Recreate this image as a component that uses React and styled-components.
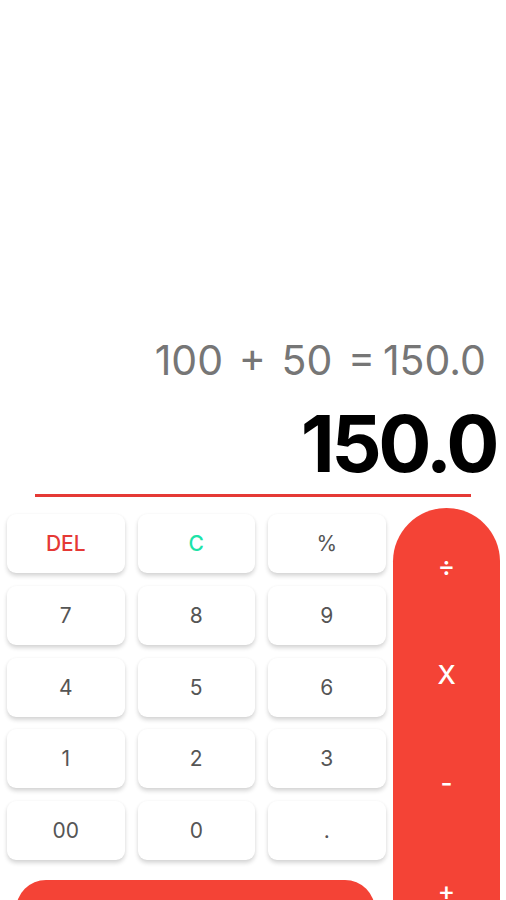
import React from "react";
import styled, { createGlobalStyle } from "styled-components";

const Global = createGlobalStyle`
  html, body { margin: 0; padding: 0; background: #ffffff; }
  body { font-family: Inter, "Noto Sans", sans-serif; }
  #root { width: 506px; height: 900px; overflow: hidden; }
`;

const Page = styled.div`
  width: 506px;
  height: 900px;
  display: flex;
  flex-direction: column;
  overflow: hidden;
  background: #fff;
`;

const Display = styled.div`
  height: 494px;
  flex-shrink: 0;
  display: flex;
  flex-direction: column;
  justify-content: flex-end;
  align-items: flex-end;
  box-sizing: border-box;
  padding-bottom: 11px;
`;

const Expression = styled.div`
  font-family: Inter, sans-serif;
  font-size: 41px;
  color: #767676;
  white-space: pre;
  word-spacing: -3.7px;
  margin-right: 20px;
  line-height: 1;
`;

const Result = styled.div`
  font-family: Inter, sans-serif;
  font-weight: 700;
  font-size: 79px;
  color: #000;
  margin-right: 10px;
  margin-top: 23px;
  line-height: 1;
  letter-spacing: -3.5px;
`;

const Divider = styled.div`
  height: 3px;
  margin-left: 35px;
  width: 436px;
  background: #e53935;
  flex-shrink: 0;
`;

const Keypad = styled.div`
  display: flex;
  align-items: flex-start;
  margin-top: 11px;
  flex-shrink: 0;
`;

const LeftPanel = styled.div`
  display: flex;
  flex-direction: column;
  padding: 6px 0 0 7px;
  width: 378px;
  flex-shrink: 0;
`;

const Grid = styled.div`
  display: grid;
  grid-template-columns: repeat(3, 117.5px);
  column-gap: 13px;
  grid-auto-rows: 59px;
  row-gap: 12.75px;
`;

const Key = styled.button`
  border: none;
  background: #fff;
  border-radius: 9px;
  box-shadow: 0 3px 4px rgba(0, 0, 0, 0.16), 0 0 3px rgba(0, 0, 0, 0.04);
  font-family: Inter, sans-serif;
  font-size: 21px;
  font-weight: ${(p) => (p.$accent ? 500 : 400)};
  color: ${(p) => p.$color || "#555"};
  display: flex;
  align-items: center;
  justify-content: center;
  padding: 0;
`;

const EqualsButton = styled.button`
  flex-shrink: 0;
  margin-top: 20px;
  margin-left: 9px;
  width: 359px;
  height: 70px;
  border: none;
  border-radius: 30px;
  background: #f44336;
`;

const OperatorColumn = styled.div`
  margin-left: 8px;
  width: 107px;
  height: 420px;
  flex-shrink: 0;
  border-radius: 54px 54px 0 0;
  background: #f44336;
  display: flex;
  flex-direction: column;
  padding-top: 4px;
  box-sizing: border-box;
`;

const OpKey = styled.button`
  height: 108px;
  flex-shrink: 0;
  border: none;
  background: transparent;
  color: #fff;
  font-family: Inter, sans-serif;
  font-size: 26px;
  font-weight: 500;
  display: flex;
  align-items: center;
  justify-content: center;
  padding: 0;
`;

const keys = [
  { label: "DEL", color: "#e53935", accent: true },
  { label: "C", color: "#1de3a8", accent: true },
  { label: "%" },
  { label: "7" },
  { label: "8" },
  { label: "9" },
  { label: "4" },
  { label: "5" },
  { label: "6" },
  { label: "1" },
  { label: "2" },
  { label: "3" },
  { label: "00" },
  { label: "0" },
  { label: "." },
];

const ops = ["÷", "X", "-", "+"];

export default function App() {
  return (
    <>
      <Global />
      <Page>
        <Display>
          <Expression>{"100  +  50  = 150.0"}</Expression>
          <Result>150.0</Result>
        </Display>
        <Divider />
        <Keypad>
          <LeftPanel>
            <Grid>
              {keys.map((k) => (
                <Key key={k.label} $color={k.color} $accent={k.accent}>
                  {k.label}
                </Key>
              ))}
            </Grid>
            <EqualsButton aria-label="equals" />
          </LeftPanel>
          <OperatorColumn>
            {ops.map((o) => (
              <OpKey key={o}>{o}</OpKey>
            ))}
          </OperatorColumn>
        </Keypad>
      </Page>
    </>
  );
}
